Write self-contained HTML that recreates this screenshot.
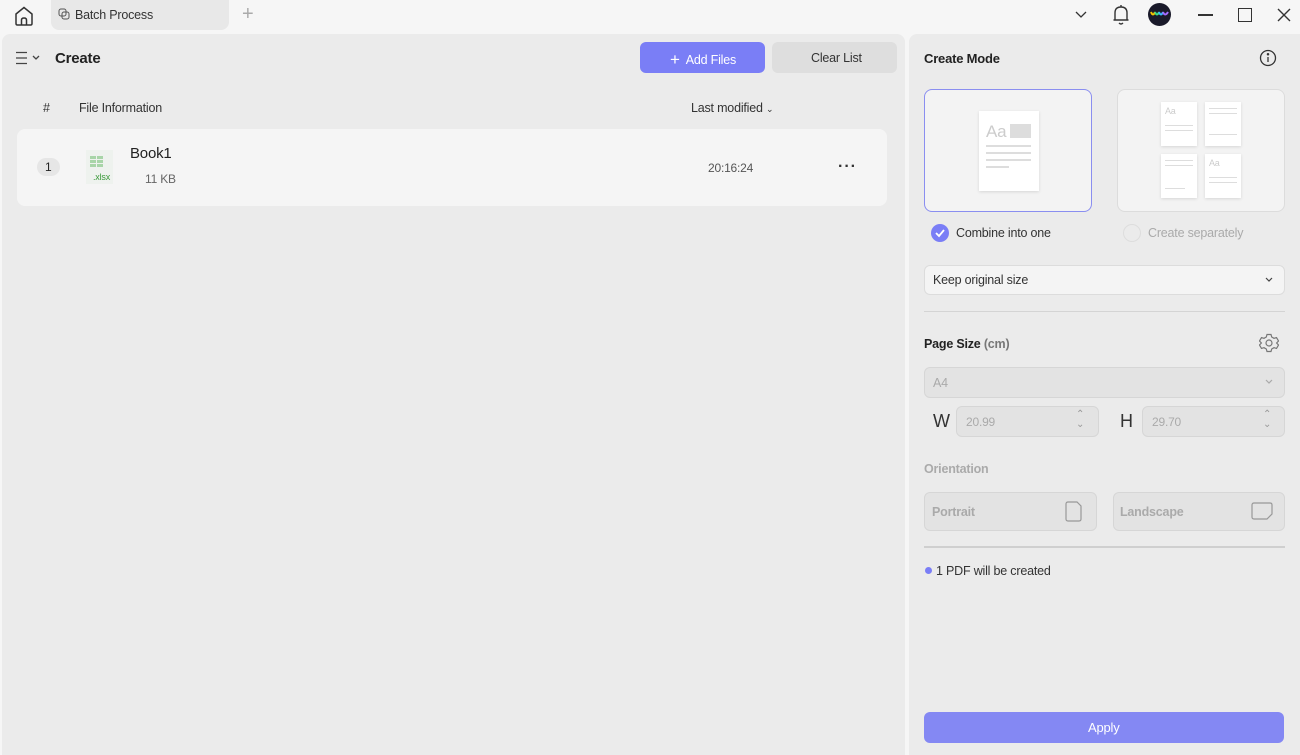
<!DOCTYPE html>
<html><head><meta charset="utf-8"><style>
*{box-sizing:border-box;margin:0;padding:0}
body{width:1300px;height:755px;background:#f6f6f6;font-family:"Liberation Sans",sans-serif;position:relative;overflow:hidden;color:#222}
.abs{position:absolute}
.left{left:2px;top:34px;width:903px;height:721px;background:#ebebeb;border-radius:8px 8px 0 0}
.right{left:909px;top:34px;width:391px;height:721px;background:#ebebeb;border-radius:8px 0 0 0}
.t{position:absolute;white-space:nowrap;letter-spacing:-0.2px}
.doc{position:absolute;background:#fff;box-shadow:0 1px 3px rgba(0,0,0,.12)}
.ln{position:absolute;height:2px;background:#ddd}
.inp{position:absolute;border:1px solid #d6d6d6;border-radius:6px;background:#e3e3e3}
</style></head><body>
<svg class="abs" style="left:13px;top:5px" width="22" height="22" viewBox="0 0 22 22" fill="none" stroke="#333" stroke-width="1.5"><path d="M3 9 L11 2.5 L19 9 V18.5 Q19 20 17.5 20 H4.5 Q3 20 3 18.5 Z"/><path d="M8.5 20 V15 Q8.5 13 11 13 Q13.5 13 13.5 15 V20"/></svg>
<div class="abs" style="left:51px;top:0;width:178px;height:30px;background:#e8e8e8;border-radius:0 0 8px 8px"></div>
<svg class="abs" style="left:58px;top:8px" width="12" height="12" viewBox="0 0 12 12" fill="none" stroke="#555" stroke-width="1"><rect x="1" y="1" width="7" height="7" rx="2"/><rect x="4" y="4" width="7" height="7" rx="2"/></svg>
<div class="t" style="left:75px;top:8px;font-size:12.5px;color:#333">Batch Process</div>
<div class="t" style="left:242px;top:3px;font-size:20px;color:#aaa;font-weight:300">+</div>
<svg class="abs" style="left:1074px;top:9px" width="14" height="12" viewBox="0 0 14 12" fill="none" stroke="#333" stroke-width="1.3"><path d="M2 3 L7 8 L12 3"/></svg>
<svg class="abs" style="left:1112px;top:4px" width="18" height="22" viewBox="0 0 18 22" fill="none" stroke="#333" stroke-width="1.4"><path d="M3 16 V9 Q3 3 9 3 Q15 3 15 9 V16 Z M1.5 16 H16.5 M7 19 Q9 21 11 19 M9 1 V3"/></svg>
<div class="abs" style="left:1148px;top:3px;width:23px;height:23px;border-radius:50%;background:#1a1a2a"></div>
<svg class="abs" style="left:1150px;top:10px" width="19" height="8" viewBox="0 0 19 8" fill="none" stroke-width="2"><path d="M1 2 Q3 7 5 2" stroke="#f5c400"/><path d="M5 2 Q7 7 9 2" stroke="#3ddc84"/><path d="M9 2 Q11 7 13 2" stroke="#38b6ff"/><path d="M13 2 Q15 7 18 2" stroke="#a46bff"/></svg>
<div class="abs" style="left:1198px;top:14px;width:15px;height:1.5px;background:#333"></div>
<div class="abs" style="left:1238px;top:8px;width:14px;height:14px;border:1.5px solid #333"></div>
<svg class="abs" style="left:1277px;top:8px" width="14" height="14" viewBox="0 0 14 14" stroke="#333" stroke-width="1.4"><path d="M1 1 L13 13 M13 1 L1 13"/></svg>

<div class="abs left"></div>
<div class="abs right"></div>

<svg class="abs" style="left:16px;top:51px" width="26" height="14" viewBox="0 0 26 14" fill="none" stroke="#444" stroke-width="1.3"><path d="M0 1.5 H11 M0 7 H11 M0 12.5 H11 M17 5 L20 8 L23 5"/></svg>
<div class="t" style="left:55px;top:50px;font-size:15px;font-weight:bold;color:#222">Create</div>
<div class="abs" style="left:640px;top:42px;width:125px;height:31px;background:#7a7ef6;border-radius:6px"></div>
<div class="t" style="left:670px;top:49px;font-size:12.5px;color:#fff"><span style="font-size:17px;position:relative;top:1px;margin-right:6px">+</span>Add Files</div>
<div class="abs" style="left:772px;top:42px;width:125px;height:31px;background:#dedede;border-radius:6px"></div>
<div class="t" style="left:811px;top:51px;font-size:12.5px;color:#333">Clear List</div>
<div class="t" style="left:43px;top:101px;font-size:12.5px;color:#333">#</div>
<div class="t" style="left:79px;top:101px;font-size:12.5px;color:#333">File Information</div>
<div class="t" style="left:691px;top:101px;font-size:12.5px;color:#333">Last modified <span style="font-size:9px">&#8964;</span></div>
<div class="abs" style="left:17px;top:129px;width:870px;height:77px;background:#f5f5f5;border-radius:8px"></div>
<div class="abs" style="left:37px;top:158px;width:23px;height:18px;background:#e6e6e6;border-radius:9px"></div>
<div class="t" style="left:45px;top:160px;font-size:12px">1</div>
<div class="abs" style="left:86px;top:150px;width:27px;height:34px;background:#eef2ee"></div>
<svg class="abs" style="left:90px;top:156px" width="14" height="12" viewBox="0 0 14 12" fill="#a8d5a8"><rect x="0" y="0" width="6" height="3"/><rect x="7" y="0" width="6" height="3"/><rect x="0" y="4" width="6" height="3"/><rect x="7" y="4" width="6" height="3"/><rect x="0" y="8" width="6" height="3"/><rect x="7" y="8" width="6" height="3"/></svg>
<div class="t" style="left:93px;top:172px;font-size:9px;color:#3a9a3a">.xlsx</div>
<div class="t" style="left:130px;top:145px;font-size:15px;color:#222">Book1</div>
<div class="t" style="left:145px;top:172px;font-size:12px;color:#666">11 KB</div>
<div class="t" style="left:708px;top:161px;font-size:12px;color:#555">20:16:24</div>
<div class="t" style="left:838px;top:158px;font-size:16px;font-weight:bold;color:#333;letter-spacing:1px">&middot;&middot;&middot;</div>

<div class="t" style="left:924px;top:51px;font-size:13px;font-weight:bold">Create Mode</div>
<svg class="abs" style="left:1259px;top:49px" width="18" height="18" viewBox="0 0 18 18" fill="none" stroke="#333" stroke-width="1.3"><circle cx="9" cy="9" r="7.5"/><path d="M9 8 V13"/><circle cx="9" cy="5.3" r=".6" fill="#333"/></svg>
<div class="abs" style="left:924px;top:89px;width:168px;height:123px;border:1.5px solid #8a8ef0;border-radius:8px;background:#f3f3f3"></div>
<div class="abs" style="left:1117px;top:89px;width:168px;height:123px;border:1px solid #dcdcdc;border-radius:8px;background:#f3f3f3"></div>
<div class="doc" style="left:979px;top:111px;width:60px;height:80px"></div>
<div class="t" style="left:986px;top:122px;font-size:17px;color:#ccc">Aa</div>
<div class="abs" style="left:1010px;top:124px;width:21px;height:14px;background:#ddd"></div>
<div class="ln" style="left:986px;top:145px;width:45px"></div><div class="ln" style="left:986px;top:152px;width:45px"></div><div class="ln" style="left:986px;top:159px;width:45px"></div><div class="ln" style="left:986px;top:166px;width:23px"></div>
<div class="doc" style="left:1161px;top:102px;width:36px;height:44px"></div>
<div class="doc" style="left:1205px;top:102px;width:36px;height:44px"></div>
<div class="doc" style="left:1161px;top:154px;width:36px;height:44px"></div>
<div class="doc" style="left:1205px;top:154px;width:36px;height:44px"></div>
<div class="ln" style="left:1165px;top:125px;width:28px;height:1px"></div><div class="ln" style="left:1165px;top:130px;width:28px;height:1px"></div>
<div class="ln" style="left:1209px;top:108px;width:28px;height:1px"></div><div class="ln" style="left:1209px;top:113px;width:28px;height:1px"></div><div class="ln" style="left:1209px;top:134px;width:28px;height:1px"></div>
<div class="ln" style="left:1165px;top:160px;width:28px;height:1px"></div><div class="ln" style="left:1165px;top:165px;width:28px;height:1px"></div><div class="ln" style="left:1165px;top:188px;width:20px;height:1px"></div>
<div class="ln" style="left:1209px;top:177px;width:28px;height:1px"></div><div class="ln" style="left:1209px;top:182px;width:28px;height:1px"></div>
<div class="t" style="left:1165px;top:106px;font-size:9px;color:#ccc">Aa</div>
<div class="t" style="left:1209px;top:158px;font-size:9px;color:#ccc">Aa</div>
<div class="abs" style="left:931px;top:224px;width:18px;height:18px;border-radius:50%;background:#7a7ef6"></div>
<svg class="abs" style="left:931px;top:224px" width="18" height="18" viewBox="0 0 18 18" fill="none" stroke="#fff" stroke-width="1.8"><path d="M5 9 L8 12 L13 6"/></svg>
<div class="t" style="left:956px;top:226px;font-size:12.5px;color:#333">Combine into one</div>
<div class="abs" style="left:1123px;top:224px;width:18px;height:18px;border-radius:50%;border:1px solid #ddd"></div>
<div class="t" style="left:1148px;top:226px;font-size:12.5px;color:#aaa">Create separately</div>
<div class="abs" style="left:924px;top:265px;width:361px;height:30px;border:1px solid #dcdcdc;border-radius:6px;background:#f4f4f4"></div>
<div class="t" style="left:933px;top:273px;font-size:12.5px;color:#333">Keep original size</div>
<svg class="abs" style="left:1264px;top:276px" width="10" height="8" viewBox="0 0 10 8" fill="none" stroke="#444" stroke-width="1.2"><path d="M2 2 L5 5 L8 2"/></svg>
<div class="abs" style="left:924px;top:311px;width:361px;height:1px;background:#d4d4d4"></div>
<div class="t" style="left:924px;top:337px;font-size:12.5px;font-weight:bold">Page Size <span style="color:#777">(cm)</span></div>
<svg class="abs" style="left:1259px;top:333px" width="20" height="20" viewBox="0 0 20 20" fill="none" stroke="#777" stroke-width="1.2"><path d="M8 1.5 H12 L12.7 4 L15 5.3 L17.5 4.6 L19.5 8 L17.6 10 L19.5 12 L17.5 15.4 L15 14.7 L12.7 16 L12 18.5 H8 L7.3 16 L5 14.7 L2.5 15.4 L0.5 12 L2.4 10 L0.5 8 L2.5 4.6 L5 5.3 L7.3 4 Z"/><circle cx="10" cy="10" r="3"/></svg>
<div class="inp" style="left:924px;top:367px;width:361px;height:31px"></div>
<div class="t" style="left:933px;top:376px;font-size:12.5px;color:#aaa">A4</div>
<svg class="abs" style="left:1264px;top:378px" width="10" height="8" viewBox="0 0 10 8" fill="none" stroke="#aaa" stroke-width="1.2"><path d="M2 2 L5 5 L8 2"/></svg>
<div class="t" style="left:933px;top:411px;font-size:18px;color:#333;font-weight:300">W</div>
<div class="inp" style="left:956px;top:406px;width:143px;height:31px"></div>
<div class="t" style="left:966px;top:415px;font-size:12px;color:#aaa">20.99</div>
<div class="t" style="left:1076px;top:410px;font-size:10px;color:#999;line-height:10px">&#8963;<br>&#8964;</div>
<div class="t" style="left:1120px;top:411px;font-size:18px;color:#333">H</div>
<div class="inp" style="left:1142px;top:406px;width:143px;height:31px"></div>
<div class="t" style="left:1152px;top:415px;font-size:12px;color:#aaa">29.70</div>
<div class="t" style="left:1263px;top:410px;font-size:10px;color:#999;line-height:10px">&#8963;<br>&#8964;</div>
<div class="t" style="left:924px;top:462px;font-size:12.5px;font-weight:bold;color:#aaa">Orientation</div>
<div class="inp" style="left:924px;top:492px;width:173px;height:39px"></div>
<div class="t" style="left:932px;top:505px;font-size:12.5px;font-weight:bold;color:#aaa">Portrait</div>
<svg class="abs" style="left:1065px;top:501px" width="18" height="21" viewBox="0 0 18 21" fill="none" stroke="#999" stroke-width="1.2"><path d="M3 1 H12 L16 5 V18 Q16 20 14 20 H3 Q1 20 1 18 V3 Q1 1 3 1 Z"/></svg>
<div class="inp" style="left:1113px;top:492px;width:172px;height:39px"></div>
<div class="t" style="left:1120px;top:505px;font-size:12.5px;font-weight:bold;color:#aaa">Landscape</div>
<svg class="abs" style="left:1251px;top:502px" width="22" height="18" viewBox="0 0 22 18" fill="none" stroke="#999" stroke-width="1.2"><path d="M3 1 H19 Q21 1 21 3 V12 L16 17 H3 Q1 17 1 15 V3 Q1 1 3 1 Z"/></svg>
<div class="abs" style="left:924px;top:546px;width:361px;height:1.5px;background:#cfcfcf"></div>
<div class="abs" style="left:925px;top:567px;width:7px;height:7px;border-radius:50%;background:#7a7ef6"></div>
<div class="t" style="left:936px;top:564px;font-size:12.5px;color:#333">1 PDF will be created</div>
<div class="abs" style="left:924px;top:712px;width:360px;height:31px;background:#8488f3;border-radius:6px"></div>
<div class="t" style="left:1088px;top:720px;font-size:13px;color:#fff">Apply</div>
</body></html>
